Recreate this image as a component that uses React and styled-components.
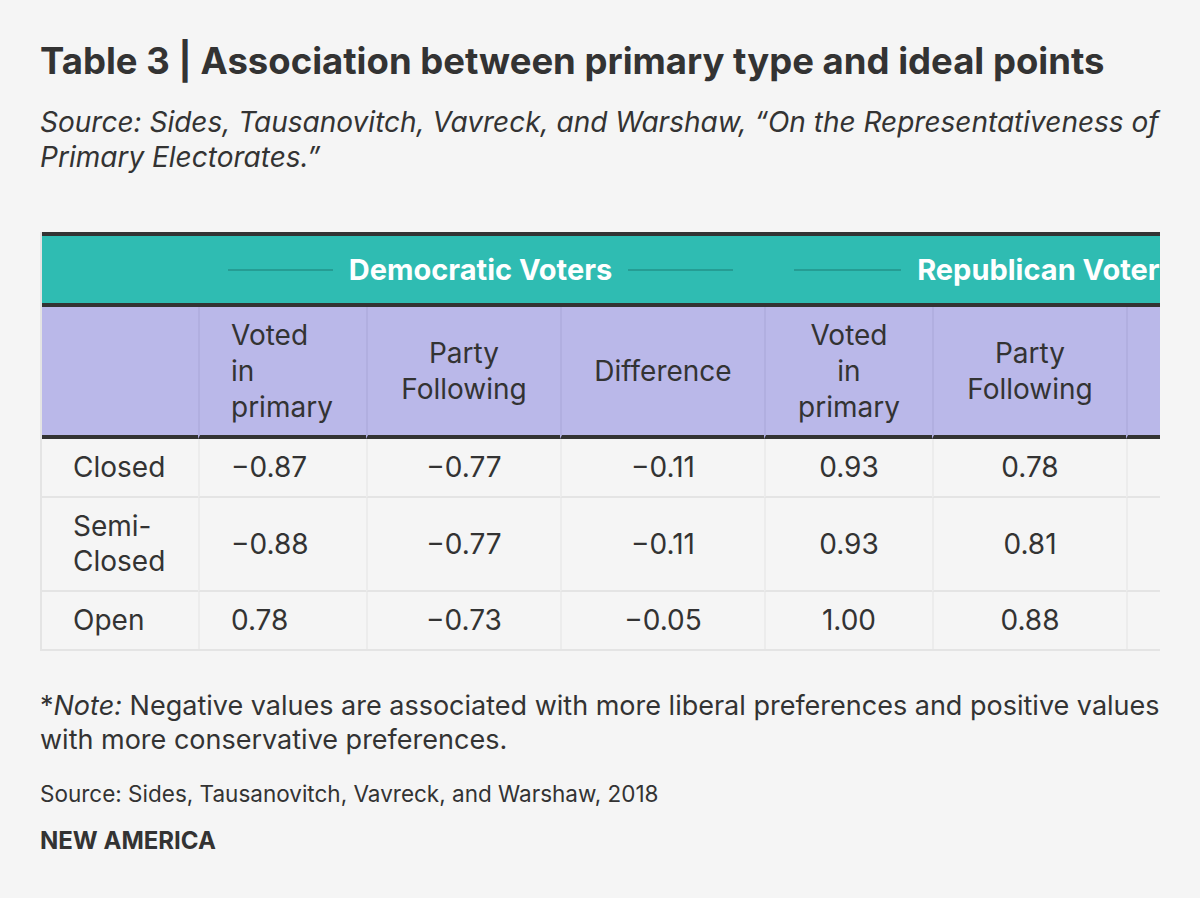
import React from "react";
import styled, { createGlobalStyle } from "styled-components";

const GlobalStyle = createGlobalStyle`
  html, body {
    margin: 0;
    padding: 0;
    background: #f5f5f5;
  }
  body {
    font-family: Inter, "Liberation Sans", sans-serif;
    color: #333;
  }
`;

const Page = styled.div`
  padding: 36px 40px 40px;
`;

const Title = styled.h1`
  margin: 0;
  font-size: 36.5px;
  line-height: 50px;
  font-weight: 700;
  color: #333;
`;

const Subtitle = styled.p`
  margin: 19px 0 0;
  font-size: 28px;
  line-height: 35px;
  font-style: italic;
  color: #333;
`;

const TableWrap = styled.div`
  margin-top: 57px;
  width: 1120px;
  overflow: hidden;
  border-left: 2px solid #e4e4e4;
  border-bottom: 2px solid #e4e4e4;
  box-sizing: border-box;
`;

const Table = styled.table`
  border-collapse: separate;
  border-spacing: 0;
  table-layout: fixed;
  width: 1288px;
  font-size: 28px;
  line-height: 35px;
`;

const GroupCell = styled.th`
  padding: 0 31px 0 30px;
  background: #2fbcb2;
  border-top: 4px solid #333;
  border-bottom: 4px solid #333;
`;

const GroupLabel = styled.div`
  height: 67px;
  display: flex;
  align-items: center;
  gap: 16px;
  color: #fff;
  font-weight: 700;
  font-size: 29px;
  white-space: nowrap;
  &::before,
  &::after {
    content: "";
    flex: 1;
    height: 2px;
    background: #259d94;
  }
`;

const HeadCell = styled.th`
  padding: 10px 31px;
  background: #bab8e9;
  font-weight: 400;
  line-height: 36px;
  text-align: ${(p) => p.$align || "center"};
  vertical-align: middle;
  border-bottom: 4px solid #333;
  border-left: 2px solid #b1afe0;
  &:first-child {
    border-left: none;
  }
`;

const Cell = styled.td`
  padding: 11px 31px;
  text-align: ${(p) => p.$align || "center"};
  vertical-align: middle;
  border-left: 2px solid #ececec;
  border-bottom: ${(p) => (p.$last ? "none" : "2px solid #e4e4e4")};
  &:first-child {
    border-left: none;
  }
`;

const Note = styled.p`
  margin: 38px 0 0;
  font-size: 27px;
  line-height: 34px;
`;

const Source = styled.p`
  margin: 22px 0 0;
  font-size: 22.5px;
  line-height: 30px;
`;

const Brand = styled.div`
  margin-top: 17px;
  font-size: 24px;
  font-weight: 700;
  line-height: 30px;
`;

const widths = [156, 168, 194, 204, 168, 194, 204];

const rows = [
  [["Closed"], "\u22120.87", "\u22120.77", "\u22120.11", "0.93", "0.78", "0.15"],
  [["Semi-", "Closed"], "\u22120.88", "\u22120.77", "\u22120.11", "0.93", "0.81", "0.12"],
  [["Open"], "0.78", "\u22120.73", "\u22120.05", "1.00", "0.88", "0.12"],
];

const headers = [
  { t: ["Voted", "in", "primary"], align: "left" },
  { t: ["Party", "Following"] },
  { t: ["Difference"] },
  { t: ["Voted", "in", "primary"] },
  { t: ["Party", "Following"] },
  { t: ["Difference"] },
];

const Lines = ({ lines }) =>
  lines.map((l, k) => (
    <React.Fragment key={k}>
      {k > 0 && <br />}
      {l}
    </React.Fragment>
  ));

export default function App() {
  return (
    <>
      <GlobalStyle />
      <Page>
        <Title>Table 3 | Association between primary type and ideal points</Title>
        <Subtitle>
          Source: Sides, Tausanovitch, Vavreck, and Warshaw, “On the Representativeness of
          Primary Electorates.”
        </Subtitle>
        <TableWrap>
          <Table>
            <colgroup>
              {widths.map((w, i) => (
                <col key={i} style={{ width: w }} />
              ))}
            </colgroup>
            <thead>
              <tr>
                <GroupCell />
                <GroupCell colSpan={3}>
                  <GroupLabel>Democratic Voters</GroupLabel>
                </GroupCell>
                <GroupCell colSpan={3}>
                  <GroupLabel>Republican Voters</GroupLabel>
                </GroupCell>
              </tr>
              <tr>
                <HeadCell />
                {headers.map((h, i) => (
                  <HeadCell key={i} $align={h.align}>
                    <Lines lines={h.t} />
                  </HeadCell>
                ))}
              </tr>
            </thead>
            <tbody>
              {rows.map((r, i) => (
                <tr key={i}>
                  {r.map((c, j) => (
                    <Cell
                      key={j}
                      $align={j < 2 ? "left" : "center"}
                      $last={i === rows.length - 1}
                    >
                      {Array.isArray(c) ? <Lines lines={c} /> : c}
                    </Cell>
                  ))}
                </tr>
              ))}
            </tbody>
          </Table>
        </TableWrap>
        <Note>
          *<i>Note:</i> Negative values are associated with more liberal preferences and positive
          values with more conservative preferences.
        </Note>
        <Source>Source: Sides, Tausanovitch, Vavreck, and Warshaw, 2018</Source>
        <Brand>NEW AMERICA</Brand>
      </Page>
    </>
  );
}
